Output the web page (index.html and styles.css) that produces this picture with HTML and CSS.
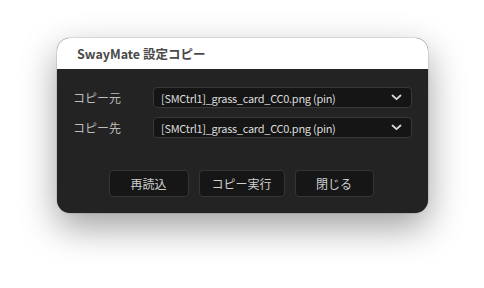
FILE: index.html
```html
<!DOCTYPE html>
<html lang="ja">
<head>
<meta charset="utf-8">
<link rel="stylesheet" href="styles.css">
</head>
<body>
<div class="window">
  <div class="titlebar">SwayMate 設定コピー</div>
  <div class="content">
    <div class="row">
      <div class="label">コピー元</div>
      <div class="select">
        <span>[SMCtrl1]_grass_card_CC0.png (pin)</span>
        <svg class="chev" width="11" height="7" viewBox="0 0 11 7"><path d="M1.5 1.5 L5.5 5.2 L9.5 1.5" fill="none" stroke="#d8d8d8" stroke-width="1.8" stroke-linecap="round" stroke-linejoin="round"/></svg>
      </div>
    </div>
    <div class="row">
      <div class="label">コピー先</div>
      <div class="select">
        <span>[SMCtrl1]_grass_card_CC0.png (pin)</span>
        <svg class="chev" width="11" height="7" viewBox="0 0 11 7"><path d="M1.5 1.5 L5.5 5.2 L9.5 1.5" fill="none" stroke="#d8d8d8" stroke-width="1.8" stroke-linecap="round" stroke-linejoin="round"/></svg>
      </div>
    </div>
    <div class="buttons">
      <div class="btn b1">再読込</div>
      <div class="btn b2">コピー実行</div>
      <div class="btn b3">閉じる</div>
    </div>
  </div>
</div>
</body>
</html>
```
FILE: styles.css
```css
html, body {
  margin: 0;
  padding: 0;
  background: #ffffff;
  width: 484px;
  height: 288px;
  overflow: hidden;
}
body {
  font-family: "Noto Sans CJK JP", "Noto Sans", sans-serif;
}
.window {
  margin-left: 57px;
  margin-top: 38px;
  width: 371px;
  height: 175px;
  border-radius: 13px;
  overflow: hidden;
  background: #232323;
  box-shadow: 0 0 0 0.5px rgba(0,0,0,0.18), 0 14px 36px rgba(0,0,0,0.38);
  display: flex;
  flex-direction: column;
}
.titlebar {
  height: 31px;
  background: #ffffff;
  color: #4a4a4a;
  font-weight: 700;
  font-size: 12.5px;
  line-height: 31px;
  padding-left: 20px;
  flex: none;
}
.content {
  flex: 1;
  padding: 18px 16px 16px 16px;
  display: flex;
  flex-direction: column;
}
.row {
  display: flex;
  align-items: center;
  height: 21px;
  margin-bottom: 9px;
}
.label {
  width: 80px;
  color: #bdbdbd;
  font-size: 12px;
}
.select {
  flex: 1;
  height: 21px;
  box-sizing: border-box;
  border: 1px solid #383838;
  border-radius: 4px;
  background: #151515;
  color: #dcdcdc;
  font-size: 11px;
  letter-spacing: -0.28px;
  display: flex;
  align-items: center;
  justify-content: space-between;
  padding: 0 9px 0 7px;
}
.chev { display: block; }
.buttons {
  margin-top: 23px;
  display: flex;
  justify-content: center;
  gap: 10px;
  padding-right: 3px;
}
.btn {
  height: 27px;
  box-sizing: border-box;
  border: 1px solid #353535;
  border-radius: 4px;
  background: #161616;
  color: #cfcfcf;
  font-size: 12px;
  display: flex;
  align-items: center;
  justify-content: center;
}
.b1 { width: 80px; }
.b2 { width: 86px; }
.b3 { width: 79px; }
```
